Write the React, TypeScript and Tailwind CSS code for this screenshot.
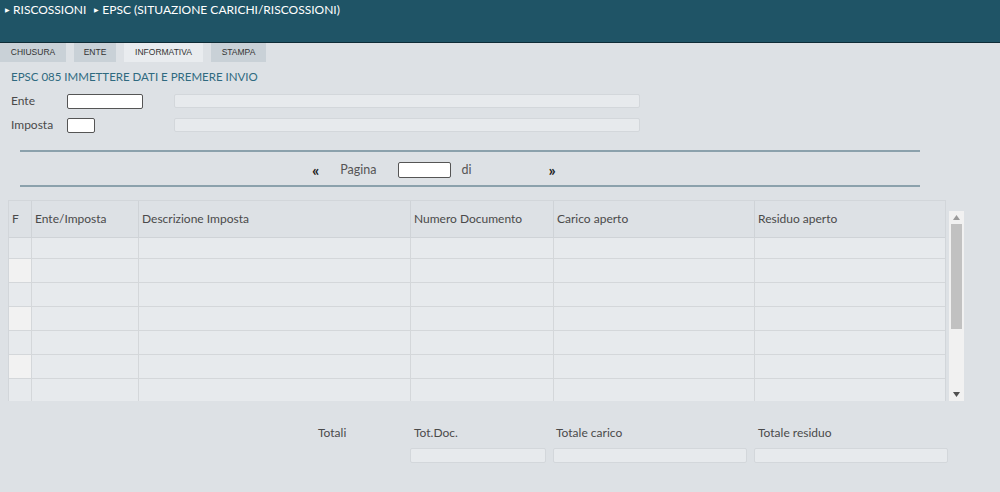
import React from "react";

const cols = [
  { label: "F", w: "w-[23px]" },
  { label: "Ente/Imposta", w: "w-[107px]" },
  { label: "Descrizione Imposta", w: "w-[272px]" },
  { label: "Numero Documento", w: "w-[143px]" },
  { label: "Carico aperto", w: "w-[201px]" },
  { label: "Residuo aperto", w: "flex-1" },
];

const tabs = [
  { label: "CHIUSURA", cls: "w-[66px] bg-[#c9d1d7]" },
  { label: "ENTE", cls: "w-[42px] bg-[#c9d1d7]" },
  { label: "INFORMATIVA", cls: "w-[79px] bg-[#e9ecef]" },
  { label: "STAMPA", cls: "w-[55px] bg-[#c9d1d7]" },
];

const Arrow = ({ dir }: { dir: "up" | "down" }) => (
  <svg width="7" height="5" viewBox="0 0 7 5">
    {dir === "up" ? (
      <polygon points="0,5 7,5 3.5,0" fill="#9a9a9a" />
    ) : (
      <polygon points="0,0 7,0 3.5,5" fill="#505050" />
    )}
  </svg>
);

export default function App() {
  return (
    <div className="w-[1000px] h-[492px] bg-[#dde1e5] font-['Lato',sans-serif] text-[#4a4a4a] overflow-hidden">
      {/* header */}
      <div className="h-[42px] bg-[#1f5466] text-white text-[12px] px-[5px] pt-[1px] flex items-start gap-[8px] leading-[17px]">
        <span className="flex items-center gap-[3px]">
          <span className="text-[6px]">▶</span>RISCOSSIONI
        </span>
        <span className="flex items-center gap-[3px]">
          <span className="text-[6px]">▶</span>EPSC (SITUAZIONE CARICHI/RISCOSSIONI)
        </span>
      </div>
      <div className="h-[1px] bg-[#0e2c36]" />

      {/* tabs */}
      <div className="flex gap-[8px] h-[19px] font-['Liberation_Sans',sans-serif] text-[8.5px] text-[#333]">
        {tabs.map((t) => (
          <div key={t.label} className={`${t.cls} flex items-center justify-center`}>
            {t.label}
          </div>
        ))}
      </div>

      {/* form */}
      <div className="pl-[11px] pt-[8px] text-[#2f6a80] text-[11.5px] leading-[14px]">
        EPSC 085 IMMETTERE DATI E PREMERE INVIO
      </div>
      <div className="flex items-center mt-[10px] h-[14px] text-[12px]">
        <span className="w-[67px] pl-[11px]">Ente</span>
        <div className="w-[76px] h-[15px] bg-white border border-[#555] rounded-[2px]" />
        <div className="ml-[31px] w-[466px] h-[14px] bg-[#e7eaed] border border-[#d3d7db] rounded-[2px]" />
      </div>
      <div className="flex items-center mt-[10px] h-[14px] text-[12px]">
        <span className="w-[67px] pl-[11px]">Imposta</span>
        <div className="w-[28px] h-[15px] bg-white border border-[#555] rounded-[2px]" />
        <div className="ml-[79px] w-[466px] h-[14px] bg-[#e7eaed] border border-[#d3d7db] rounded-[2px]" />
      </div>

      {/* pager */}
      <div className="ml-[20px] w-[900px] mt-[18px] border-t-2 border-b-2 border-[#8ba1ac] h-[37px] pt-[3px] flex items-center text-[12.5px]">
        <span className="ml-[292px] text-[16px] font-bold text-[#222] leading-none">«</span>
        <span className="ml-[21px] text-[#555]">Pagina</span>
        <div className="ml-[21px] w-[53px] h-[16px] bg-white border border-[#555] rounded-[2px]" />
        <span className="ml-[11px] text-[#555]">di</span>
        <span className="ml-[77px] text-[16px] font-bold text-[#222] leading-none">»</span>
      </div>

      {/* table */}
      <div className="flex mt-[13px] ml-[8px]">
        <div className="w-[938px] h-[201px] border border-[#d2d6da] border-b-0 flex flex-col">
          <div className="flex h-[37px] bg-[#dde1e5] border-b border-[#cfd3d7] text-[12px] text-[#4a4a4a]">
            {cols.map((c, i) => (
              <div
                key={c.label}
                className={`${c.w} flex items-center pl-[3px] ${i < cols.length - 1 ? "border-r border-[#cfd3d7]" : ""}`}
              >
                {c.label}
              </div>
            ))}
          </div>
          {Array.from({ length: 7 }).map((_, r) => (
            <div
              key={r}
              className={`flex ${r === 0 ? "h-[21px] border-b border-[#d4d7da]" : r < 6 ? "h-[24px] border-b border-[#d4d7da]" : "flex-1"} bg-[#e7eaed]`}
            >
              {cols.map((c, i) => (
                <div
                  key={c.label}
                  className={`${c.w} ${i === 0 && r % 2 === 1 ? "bg-[#f2f2f2]" : ""} ${i < cols.length - 1 ? "border-r border-[#d4d7da]" : ""}`}
                />
              ))}
            </div>
          ))}
        </div>
        <div className="ml-[3px] mt-[11px] w-[15px] h-[190px] bg-[#f1f1f1] flex flex-col items-center">
          <div className="h-[13px] flex items-center">
            <Arrow dir="up" />
          </div>
          <div className="w-[11px] h-[105px] bg-[#c1c1c1]" />
          <div className="flex-1" />
          <div className="h-[13px] flex items-center">
            <Arrow dir="down" />
          </div>
        </div>
      </div>

      {/* totals */}
      <div className="flex text-[12px] text-[#4a4a4a] mt-[23px]">
        <span className="ml-[318px] w-[92px]">Totali</span>
        <div className="flex flex-col gap-[6px] w-[136px]">
          <span className="pl-[4px]">Tot.Doc.</span>
          <div className="h-[15px] bg-[#e7eaed] border border-[#d3d7db] rounded-[2px]" />
        </div>
        <div className="flex flex-col gap-[6px] w-[194px] ml-[7px]">
          <span className="pl-[3px]">Totale carico</span>
          <div className="h-[15px] bg-[#e7eaed] border border-[#d3d7db] rounded-[2px]" />
        </div>
        <div className="flex flex-col gap-[6px] w-[194px] ml-[7px]">
          <span className="pl-[4px]">Totale residuo</span>
          <div className="h-[15px] bg-[#e7eaed] border border-[#d3d7db] rounded-[2px]" />
        </div>
      </div>
    </div>
  );
}
